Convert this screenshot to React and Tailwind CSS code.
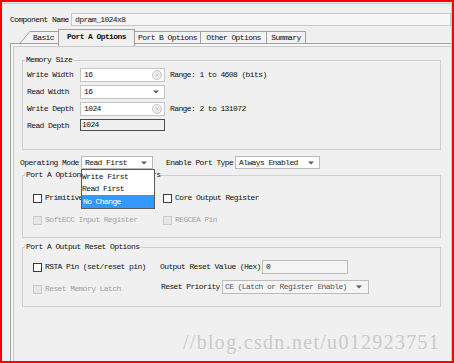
import React from "react";

function ClearIcon() {
  return (
    <svg width="10" height="10" viewBox="0 0 10 10" className="shrink-0">
      <circle cx="5" cy="5" r="4.5" fill="#ededed" stroke="#c6c6c6" />
      <path d="M3.4 3.4l3.2 3.2M6.6 3.4l-3.2 3.2" stroke="#cfcfcf" strokeWidth="1" />
    </svg>
  );
}

function Arrow() {
  return (
    <svg width="6" height="4" viewBox="0 0 6 4" className="shrink-0">
      <path d="M0 0.5h6L3 3.5z" fill="#5a5a5a" />
    </svg>
  );
}

function Check({ label, disabled }) {
  return (
    <div className="flex items-center">
      <span
        className={
          disabled
            ? "size-[9px] shrink-0 border border-[#cacaca] bg-[#e7e7e7]"
            : "size-[9px] shrink-0 border border-[#3a3a3a] bg-white"
        }
      />
      <span className={disabled ? "ml-[3px] text-[#a3a3a3]" : "ml-[3px]"}>{label}</span>
    </div>
  );
}

export default function App() {
  return (
    <div className="w-[454px] h-[363px] overflow-hidden whitespace-nowrap border-2 border-[#ff0000] bg-[#f0f0f0] font-['Liberation_Mono',monospace] text-[8px] leading-[10px] tracking-[-0.6px] text-[#111111]">
      <div className="mt-px flex h-[400px] flex-col border-t border-r border-[#c9c9c9]">
        {/* Component name */}
        <div className="flex items-center pl-[8px] pt-[9px]">
          <span className="w-[61px] shrink-0">Component Name</span>
          <div className="flex h-[13px] flex-1 items-center border border-[#c8c8c8] bg-[#f7f7f7] pl-[3px]">
            dpram_1024x8
          </div>
        </div>

        {/* Tabs */}
        <div className="mt-[3px] flex h-[14px] items-end pl-[18px]">
          <svg width="10" height="12" viewBox="0 0 10 12" className="block shrink-0">
            <path d="M0 12L10 0V12Z" fill="#f3f3f3" />
            <path d="M0.3 12L9.8 0.5H10" stroke="#a0a0a0" fill="none" />
          </svg>
          <div className="flex h-[12px] w-[28px] items-center border-t border-[#a0a0a0] bg-[#f3f3f3] pl-[3px]">
            Basic
          </div>
          <div className="relative z-10 -mb-[3px] flex h-[17px] w-[77px] items-start justify-center border border-b-0 border-[#a0a0a0] bg-[#f0f0f0] pt-[2px] font-bold">
            Port A Options
          </div>
          <div className="flex h-[12px] w-[66px] items-center justify-center border-t border-r border-[#a0a0a0] bg-[#f3f3f3]">
            Port B Options
          </div>
          <div className="flex h-[12px] w-[66px] items-center justify-center border-t border-r border-[#a0a0a0] bg-[#f3f3f3]">
            Other Options
          </div>
          <div className="flex h-[12px] w-[39px] items-center justify-center border-t border-r border-[#a0a0a0] bg-[#f3f3f3]">
            Summary
          </div>
        </div>

        {/* Panel */}
        <div className="ml-[8px] flex flex-1 flex-col border-l border-t border-[#a0a0a0] shadow-[inset_2px_2px_0_#f7f7f7,inset_3px_3px_0_#c9c9c9]">
          {/* Memory Size */}
          <fieldset className="mt-[11px] ml-[11px] mr-[10px] min-w-0 border border-[#d0d0d0] pl-[4px] pt-[3px] pb-[16px]">
            <legend className="-ml-[2px] px-[1px] leading-[10px]">Memory Size</legend>
            <div className="flex flex-col gap-[3px]">
              <div className="flex h-[14px] items-center">
                <span className="w-[53px] shrink-0">Write Width</span>
                <div className="flex h-[14px] w-[85px] items-center justify-between border border-[#c5c5c5] bg-white pl-[3px] pr-[2px]">
                  <span>16</span>
                  <ClearIcon />
                </div>
                <span className="ml-[5px]">Range: 1 to 4608 (bits)</span>
              </div>
              <div className="flex h-[14px] items-center">
                <span className="w-[53px] shrink-0">Read Width</span>
                <div className="flex h-[14px] w-[85px] items-center justify-between border border-[#c5c5c5] bg-white pl-[3px] pr-[5px]">
                  <span>16</span>
                  <Arrow />
                </div>
              </div>
              <div className="flex h-[14px] items-center">
                <span className="w-[53px] shrink-0">Write Depth</span>
                <div className="flex h-[14px] w-[85px] items-center justify-between border border-[#c5c5c5] bg-white pl-[3px] pr-[2px]">
                  <span>1024</span>
                  <ClearIcon />
                </div>
                <span className="ml-[5px]">Range: 2 to 131072</span>
              </div>
              <div className="flex h-[14px] items-start">
                <span className="mt-[2px] w-[53px] shrink-0">Read Depth</span>
                <div className="flex h-[12px] w-[85px] items-center border border-[#4d4d4d] bg-[#f0f0f0] pl-[1px]">
                  1024
                </div>
              </div>
            </div>
          </fieldset>

          {/* Operating mode row */}
          <div className="mt-[6px] flex h-[13px] items-center pl-[9px]">
            <span className="w-[61px] shrink-0">Operating Mode</span>
            <div className="relative z-20 flex h-[13px] w-[72px] items-center justify-between border border-[#b9b9b9] bg-white pl-[3px] pr-[5px]">
              <span>Read First</span>
              <Arrow />
              <div className="absolute left-[-1px] top-[12px] w-[74px] border border-[#5a5a5a] bg-white">
                <div className="flex h-[13px] items-center">Write First</div>
                <div className="flex h-[12px] items-center">Read First</div>
                <div className="flex h-[13px] items-center bg-[#3399ff] pl-px text-white">No Change</div>
              </div>
            </div>
            <span className="ml-[13px] w-[69px] shrink-0">Enable Port Type</span>
            <div className="flex h-[13px] w-[85px] items-center justify-between border border-[#b9b9b9] bg-white pl-[3px] pr-[5px]">
              <span>Always Enabled</span>
              <Arrow />
            </div>
          </div>

          {/* Port A Optional Output Registers */}
          <fieldset className="mt-[1px] ml-[11px] mr-[10px] min-w-0 border border-[#d0d0d0] pl-[10px] pt-[12px] pb-[11px]">
            <legend className="-ml-[8px] px-[1px] leading-[10px]">Port A Optional Output Registers</legend>
            <div className="grid grid-cols-[130px_1fr] gap-y-[10px]">
              <div className="flex h-[12px] items-center">
                <Check label="Primitives Output Register" />
              </div>
              <div className="flex h-[12px] items-center">
                <Check label="Core Output Register" />
              </div>
              <div className="flex h-[12px] items-center">
                <Check label="SoftECC Input Register" disabled />
              </div>
              <div className="flex h-[12px] items-center">
                <Check label="REGCEA Pin" disabled />
              </div>
            </div>
          </fieldset>

          {/* Port A Output Reset Options */}
          <fieldset className="mt-[4px] ml-[11px] mr-[10px] min-w-0 border border-[#d0d0d0] pl-[10px] pt-[8px] pb-[12px]">
            <legend className="-ml-[8px] px-[1px] leading-[10px]">Port A Output Reset Options</legend>
            <div className="grid grid-cols-[127px_1fr] gap-y-[6px]">
              <div className="flex h-[14px] items-center">
                <Check label="RSTA Pin (set/reset pin)" />
              </div>
              <div className="flex h-[14px] items-center">
                <span className="w-[102px] shrink-0">Output Reset Value (Hex)</span>
                <div className="flex h-[14px] w-[86px] items-center border border-[#bcbcbc] bg-[#f5f5f5] pl-[3px]">
                  0
                </div>
              </div>
              <div className="flex h-[14px] items-end">
                <Check label="Reset Memory Latch" disabled />
              </div>
              <div className="flex h-[14px] items-center pl-[1px]">
                <span className="w-[61px] shrink-0">Reset Priority</span>
                <div className="flex h-[14px] w-[147px] items-center justify-between border border-[#bcbcbc] bg-[#f5f5f5] pl-[2px] pr-[6px] text-[#555555]">
                  <span>CE (Latch or Register Enable)</span>
                  <Arrow />
                </div>
              </div>
            </div>
          </fieldset>

          {/* watermark */}
          <div className="mt-[24px] pl-[172px] font-['Liberation_Serif',serif] text-[20px] leading-[23px] tracking-[1.3px] text-[#cbcbcb]">
            //blog.csdn.net/u012923751
          </div>
        </div>
      </div>
    </div>
  );
}
